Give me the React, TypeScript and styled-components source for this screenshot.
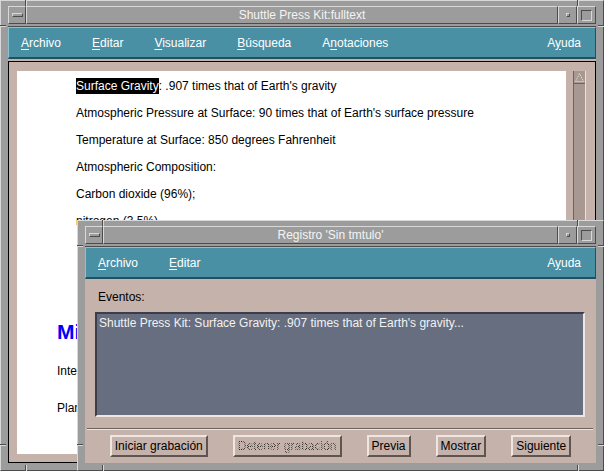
import styled, { createGlobalStyle, css } from "styled-components";

const FRAME = "#9c9c9c";
const FRAME_LIGHT = "#d8d8d8";
const FRAME_DARK = "#4c4c4c";
const TEAL = "#4a90a5";
const TEAL_LIGHT = "#8cc2d2";
const TEAL_DARK = "#22505e";
const TAN = "#c5b2aa";
const TAN_LIGHT = "#efe6e2";
const TAN_DARK = "#5e5450";
const SLATE = "#666e80";

const GlobalStyle = createGlobalStyle`
  html, body {
    margin: 0;
    padding: 0;
    background: ${FRAME};
  }
  body {
    font-family: "Liberation Sans", Arial, sans-serif;
    font-size: 12px;
  }
`;

const Desktop = styled.div`
  position: relative;
  width: 604px;
  height: 471px;
  overflow: hidden;
`;

const Window = styled.div<{ $floating?: boolean }>`
  position: relative;
  box-sizing: border-box;
  display: flex;
  flex-direction: column;
  gap: 2px;
  padding: 5px 7px 7px 7px;
  background: ${FRAME};
  border: 1px solid;
  border-color: ${FRAME_LIGHT} ${FRAME_DARK} ${FRAME_DARK} ${FRAME_LIGHT};
  ${(p) =>
    p.$floating
      ? css`
          position: absolute;
          left: 77px;
          top: 220px;
          width: 527px;
          height: 251px;
        `
      : css`
          width: 604px;
          height: 471px;
        `}
`;

/* resize-handle grooves cut into the window frame */
const Notch = styled.span<{ $vertical?: boolean; $at: string; $edge: string }>`
  position: absolute;
  ${(p) =>
    p.$vertical
      ? css`
          width: 0;
          height: 6px;
          border-left: 1px solid ${FRAME_DARK};
          border-right: 1px solid ${FRAME_LIGHT};
        `
      : css`
          height: 0;
          width: 6px;
          border-top: 1px solid ${FRAME_DARK};
          border-bottom: 1px solid ${FRAME_LIGHT};
        `}
  ${(p) => p.$at}
  ${(p) => p.$edge}
`;

const TitleRow = styled.div`
  display: flex;
  height: 18px;
  flex: none;
`;

const Bevel = css`
  box-sizing: border-box;
  background: ${FRAME};
  border: 1px solid;
  border-color: ${FRAME_LIGHT} ${FRAME_DARK} ${FRAME_DARK} ${FRAME_LIGHT};
  display: flex;
  align-items: center;
  justify-content: center;
`;

const TitleButton = styled.div<{ $w: number }>`
  ${Bevel}
  width: ${(p) => p.$w}px;
  flex: none;
`;

const Title = styled.div<{ $shift?: number }>`
  ${Bevel}
  flex: 1;
  color: #f4f4f4;
  font-size: 12px;
  padding-left: ${(p) => p.$shift ?? 0}px;
  white-space: nowrap;
`;

const MenuGlyph = styled.span`
  box-sizing: border-box;
  width: 11px;
  height: 4px;
  border: 1px solid;
  border-color: ${FRAME_LIGHT} ${FRAME_DARK} ${FRAME_DARK} ${FRAME_LIGHT};
`;

const MinGlyph = styled.span`
  box-sizing: border-box;
  width: 4px;
  height: 4px;
  border: 1px solid;
  border-color: ${FRAME_LIGHT} ${FRAME_DARK} ${FRAME_DARK} ${FRAME_LIGHT};
`;

const MaxGlyph = styled.span`
  box-sizing: border-box;
  width: 11px;
  height: 11px;
  border: 1px solid;
  border-color: ${FRAME_DARK} ${FRAME_LIGHT} ${FRAME_LIGHT} ${FRAME_DARK};
`;

const Client = styled.div`
  flex: 1;
  min-height: 0;
  display: flex;
  flex-direction: column;
  border-top: 1px solid ${FRAME_DARK};
  background: ${TAN};
`;

const MenuBar = styled.div`
  box-sizing: border-box;
  height: 32px;
  flex: none;
  display: flex;
  align-items: center;
  background: ${TEAL};
  border-top: 1px solid ${TEAL_LIGHT};
  border-left: 1px solid ${TEAL_LIGHT};
  border-bottom: 2px solid ${TEAL_DARK};
  border-right: 1px solid ${TEAL_DARK};
`;

const MenuItem = styled.span<{ $right?: boolean }>`
  color: #ffffff;
  font-size: 12px;
  padding: 0 ${(p) => (p.$right ? 14 : 16)}px 0 15px;
  margin-left: ${(p) => (p.$right ? "auto" : "0")};
  &:first-child {
    padding-left: 12px;
  }
  u {
    text-underline-offset: 2px;
  }
`;

const DocBody = styled.div`
  flex: 1;
  min-height: 0;
  display: flex;
  padding-top: 2px;
`;

const DocFrame = styled.div`
  flex: 1;
  display: flex;
  gap: 7px;
  border: 1px solid #000;
  padding: 9px 9px 8px 8px;
`;

const Page = styled.div`
  flex: 1;
  background: #ffffff;
  overflow: hidden;
  color: #000;
  padding-top: 2px;
`;

const Indented = styled.div`
  padding-left: 59px;
`;

const Line = styled.div`
  line-height: 27px;
  white-space: nowrap;
`;

const Selected = styled.span`
  background: #000;
  color: #fff;
  padding: 1px 0;
`;

const Heading = styled.div`
  margin-top: 85px;
  padding-left: 40px;
  color: #0000ff;
  font-weight: bold;
  font-size: 21px;
  line-height: 24px;
  white-space: nowrap;
`;

const Para = styled.div<{ $gap: number }>`
  margin-top: ${(p) => p.$gap}px;
  padding-left: 40px;
  line-height: 27px;
  white-space: nowrap;
`;

const ScrollTrough = styled.div`
  box-sizing: border-box;
  width: 13px;
  flex: none;
  background: #a89892;
  border-left: 1px solid #6c625e;
  border-right: 1px solid #eae0dc;
  display: flex;
  flex-direction: column;
`;

const ScrollArrow = styled.div`
  height: 12px;
  border-bottom: 1px solid #6c625e;
  display: flex;
  align-items: center;
  justify-content: center;
`;

const LogBody = styled.div`
  flex: 1;
  display: flex;
  flex-direction: column;
  padding: 11px 0 6px 0;
`;

const Label = styled.div`
  line-height: 14px;
  padding-left: 13px;
  color: #000;
`;

const LogList = styled.div`
  box-sizing: border-box;
  height: 105px;
  margin: 8px 11px 0 10px;
  background: ${SLATE};
  border: 2px solid;
  border-color: #3c3c4a ${TAN_LIGHT} ${TAN_LIGHT} #3c3c4a;
  padding: 2px 2px;
  color: #f2f2f2;
  line-height: 14px;
  white-space: nowrap;
  overflow: hidden;
`;

const Separator = styled.div`
  height: 0;
  margin: 11px 3px 5px 2px;
  border-top: 1px solid #6c625e;
  border-bottom: 1px solid ${TAN_LIGHT};
`;

const ButtonRow = styled.div`
  display: flex;
  justify-content: center;
  gap: 25px;
`;

const PushButton = styled.button<{ $disabled?: boolean }>`
  box-sizing: border-box;
  height: 22px;
  padding: 0 3px;
  margin: 0;
  font-family: "Liberation Sans", Arial, sans-serif;
  font-size: 12px;
  color: #000;
  background: ${TAN};
  border: 2px solid;
  border-color: ${TAN_LIGHT} ${TAN_DARK} ${TAN_DARK} ${TAN_LIGHT};
  border-radius: 0;
  white-space: nowrap;
  ${(p) =>
    p.$disabled &&
    css`
      span {
        color: transparent;
        background: repeating-conic-gradient(#2e2a28 0 25%, transparent 0 50%) 0 0 / 2px 2px;
        -webkit-background-clip: text;
        background-clip: text;
      }
    `}
`;

const Mnemonic = ({ text, at }: { text: string; at: number }) => (
  <>
    {text.slice(0, at)}
    <u>{text[at]}</u>
    {text.slice(at + 1)}
  </>
);

const Notches = ({ w, h }: { w: number; h: number }) => (
  <>
    <Notch $vertical $at="left: 24px;" $edge="top: -1px;" />
    <Notch $vertical $at={`left: ${w - 28}px;`} $edge="top: -1px;" />
    <Notch $vertical $at="left: 24px;" $edge="bottom: -1px;" />
    <Notch $vertical $at={`left: ${w - 28}px;`} $edge="bottom: -1px;" />
    <Notch $at="top: 24px;" $edge="left: -1px;" />
    <Notch $at="top: 24px;" $edge="right: -1px;" />
    <Notch $at={`top: ${h - 28}px;`} $edge="left: -1px;" />
    <Notch $at={`top: ${h - 28}px;`} $edge="right: -1px;" />
  </>
);

const TitleBar = ({ title, shift }: { title: string; shift?: number }) => (
  <TitleRow>
    <TitleButton $w={18}>
      <MenuGlyph />
    </TitleButton>
    <Title $shift={shift}>{title}</Title>
    <TitleButton $w={19}>
      <MinGlyph />
    </TitleButton>
    <TitleButton $w={19}>
      <MaxGlyph />
    </TitleButton>
  </TitleRow>
);

export default function App() {
  return (
    <Desktop>
      <GlobalStyle />
      <Window>
        <Notches w={604} h={471} />
        <TitleBar title="Shuttle Press Kit:fulltext" shift={20} />
        <Client>
          <MenuBar>
            <MenuItem>
              <Mnemonic text="Archivo" at={0} />
            </MenuItem>
            <MenuItem>
              <Mnemonic text="Editar" at={0} />
            </MenuItem>
            <MenuItem>
              <Mnemonic text="Visualizar" at={0} />
            </MenuItem>
            <MenuItem>
              <Mnemonic text="Búsqueda" at={0} />
            </MenuItem>
            <MenuItem>
              <Mnemonic text="Anotaciones" at={1} />
            </MenuItem>
            <MenuItem $right>
              <Mnemonic text="Ayuda" at={1} />
            </MenuItem>
          </MenuBar>
          <DocBody>
            <DocFrame>
              <Page>
                <Indented>
                  <Line>
                    <Selected>Surface Gravity</Selected>: .907 times that of Earth's gravity
                  </Line>
                  <Line>Atmospheric Pressure at Surface: 90 times that of Earth's surface pressure</Line>
                  <Line>Temperature at Surface: 850 degrees Fahrenheit</Line>
                  <Line>Atmospheric Composition:</Line>
                  <Line>Carbon dioxide (96%);</Line>
                  <Line>nitrogen (3.5%)</Line>
                </Indented>
                <Heading>Mission</Heading>
                <Para $gap={14}>Interplanetary cruise</Para>
                <Para $gap={10}>Planetary mapping</Para>
              </Page>
              <ScrollTrough>
                <ScrollArrow>
                  <svg width="9" height="9" viewBox="0 0 9 9">
                    <polygon
                      points="4.5,0.5 8.5,8.5 0.5,8.5"
                      fill="none"
                      stroke="#efe6e2"
                      strokeWidth="1"
                      strokeDasharray="1 1"
                    />
                  </svg>
                </ScrollArrow>
              </ScrollTrough>
            </DocFrame>
          </DocBody>
        </Client>
      </Window>

      <Window $floating>
        <Notches w={527} h={251} />
        <TitleBar title="Registro 'Sin tmtulo'" />
        <Client>
          <MenuBar>
            <MenuItem>
              <Mnemonic text="Archivo" at={0} />
            </MenuItem>
            <MenuItem>
              <Mnemonic text="Editar" at={0} />
            </MenuItem>
            <MenuItem $right>
              <Mnemonic text="Ayuda" at={1} />
            </MenuItem>
          </MenuBar>
          <LogBody>
            <Label>Eventos:</Label>
            <LogList>Shuttle Press Kit: Surface Gravity: .907 times that of Earth's gravity...</LogList>
            <Separator />
            <ButtonRow>
              <PushButton>Iniciar grabación</PushButton>
              <PushButton $disabled>
                <span>Detener grabación</span>
              </PushButton>
              <PushButton>Previa</PushButton>
              <PushButton>Mostrar</PushButton>
              <PushButton>Siguiente</PushButton>
            </ButtonRow>
          </LogBody>
        </Client>
      </Window>
    </Desktop>
  );
}
